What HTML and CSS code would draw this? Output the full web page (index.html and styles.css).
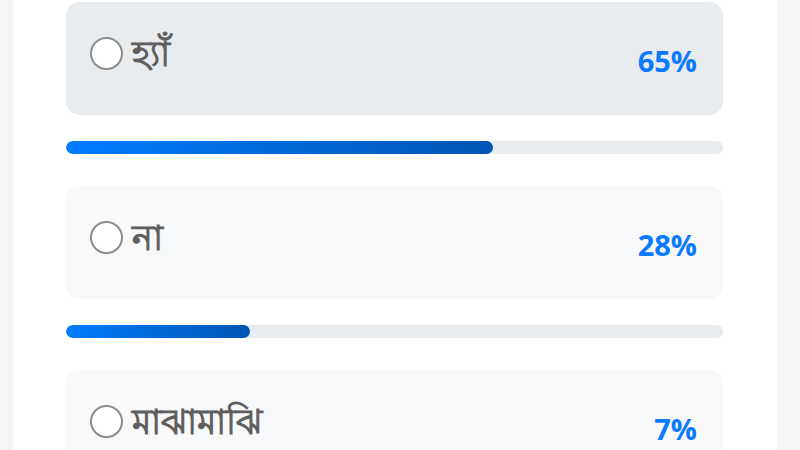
FILE: index.html
```html
<!DOCTYPE html>
<html lang="bn">
<head>
<meta charset="utf-8">
<link rel="stylesheet" href="styles.css">
</head>
<body>
<div class="card">
  <div class="poll">
    <label class="option active">
      <span class="choice"><input type="radio" name="vote"><span class="text">হ্যাঁ</span></span>
      <span class="pct">65%</span>
    </label>
    <div class="bar"><div class="fill" style="width:65%"></div></div>

    <label class="option">
      <span class="choice"><input type="radio" name="vote"><span class="text">না</span></span>
      <span class="pct">28%</span>
    </label>
    <div class="bar"><div class="fill" style="width:28%"></div></div>

    <label class="option">
      <span class="choice"><input type="radio" name="vote"><span class="text">মাঝামাঝি</span></span>
      <span class="pct">7%</span>
    </label>
    <div class="bar"><div class="fill" style="width:7%"></div></div>
  </div>
</div>
</body>
</html>
```

FILE: styles.css
```css
html, body {
  margin: 0;
  padding: 0;
  background: #f5f5f6;
  height: 100%;
  overflow: hidden;
}
body {
  font-family: "Open Sans", "Noto Sans", sans-serif;
}
.card {
  margin-left: 13px;
  width: 764px;
  background: #ffffff;
  min-height: 100%;
  padding: 2px 54px 0 53px;
  box-sizing: border-box;
}
.poll {
  display: flex;
  flex-direction: column;
}
.option {
  display: flex;
  align-items: center;
  justify-content: space-between;
  height: 113px;
  box-sizing: border-box;
  padding: 0 26px 0 24px;
  background: #f8f9fa;
  border-radius: 14px;
}
.option.active {
  background: #e9ecef;
}
.choice {
  display: flex;
  align-items: center;
  margin-top: -11px;
}
.choice input {
  appearance: none;
  -webkit-appearance: none;
  width: 33px;
  height: 33px;
  margin: 0 9px 0 0;
  border: 2px solid #8c8c8c;
  border-radius: 50%;
  background: #ffffff;
  box-sizing: border-box;
}
.text {
  font-size: 35px;
  font-weight: 700;
  line-height: 40px;
  color: #5f5f5f;
}
.pct {
  font-size: 29px;
  font-weight: 700;
  color: #0a7bff;
  margin-top: 4px;
}
.bar {
  height: 13px;
  margin: 26px 0 32px;
  background: #e9ecef;
  border-radius: 7px;
  overflow: hidden;
}
.fill {
  height: 100%;
  border-radius: 7px;
  background: linear-gradient(90deg, #007bff, #0056b3);
}
```
